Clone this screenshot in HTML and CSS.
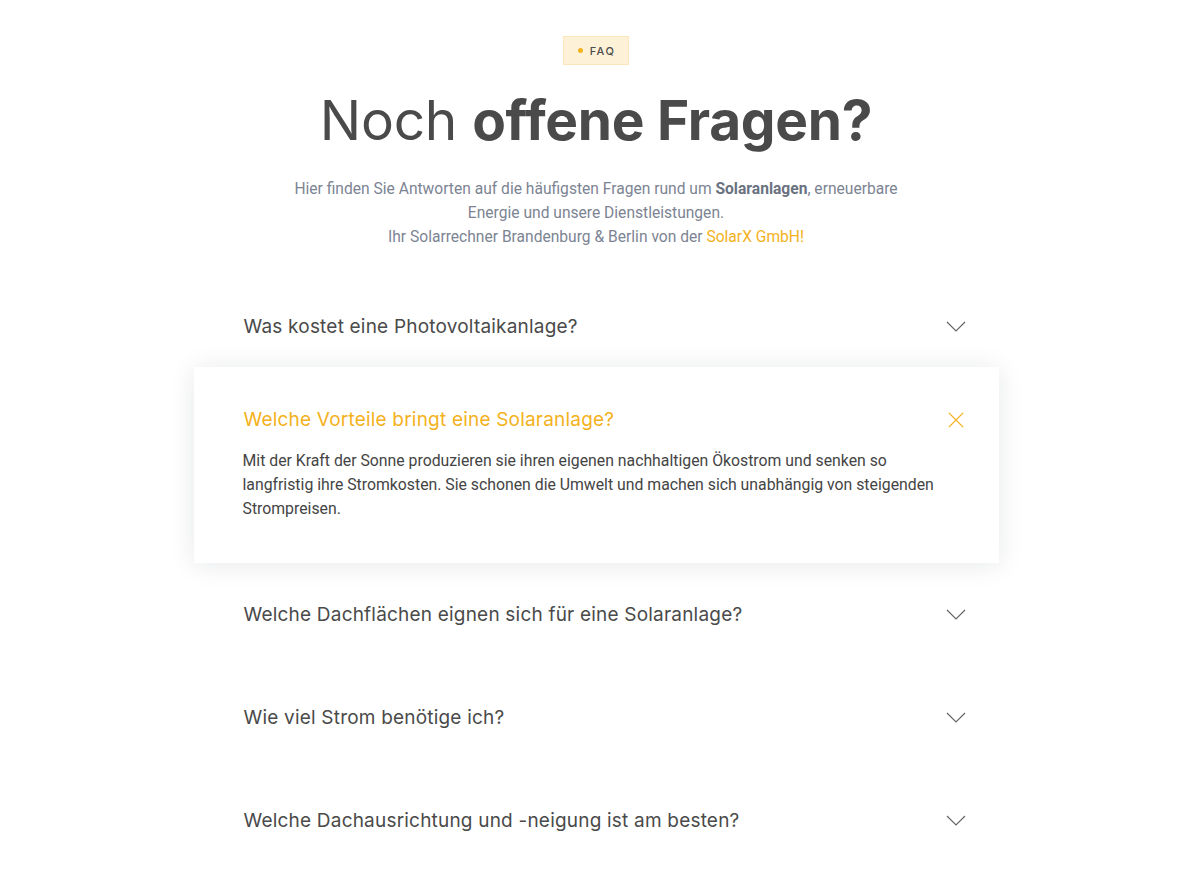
FILE: index.html
```html
<!DOCTYPE html>
<html lang="de">
<head>
  <meta charset="UTF-8">
  <meta name="viewport" content="width=device-width, initial-scale=1">
  <title>FAQ – SolarX GmbH</title>
  <link rel="stylesheet" href="styles.css">
</head>
<body>
  <section class="faq">
    <span class="badge"><span class="badge-dot"></span>FAQ</span>
    <h1 class="title">Noch <strong>offene Fragen?</strong></h1>
    <p class="intro">
      Hier finden Sie Antworten auf die häufigsten Fragen rund um <strong>Solaranlagen</strong>, erneuerbare
      Energie und unsere Dienstleistungen.<br>
      Ihr Solarrechner Brandenburg &amp; Berlin von der <a href="#">SolarX GmbH!</a>
    </p>

    <div class="faq-list">
      <div class="faq-item first">
        <span class="question">Was kostet eine Photovoltaikanlage?</span>
        <svg class="icon" viewBox="0 0 20 12"><path d="M1 1l9 9 9-9"/></svg>
      </div>
      <div class="faq-item open">
        <div class="faq-head">
          <span class="question">Welche Vorteile bringt eine Solaranlage?</span>
          <svg class="icon icon-close" viewBox="0 0 18 18"><path d="M1 1l16 16M17 1L1 17"/></svg>
        </div>
        <p class="answer">Mit der Kraft der Sonne produzieren sie ihren eigenen nachhaltigen Ökostrom und senken so langfristig ihre Stromkosten. Sie schonen die Umwelt und machen sich unabhängig von steigenden Strompreisen.</p>
      </div>
      <div class="faq-item">
        <span class="question">Welche Dachflächen eignen sich für eine Solaranlage?</span>
        <svg class="icon" viewBox="0 0 20 12"><path d="M1 1l9 9 9-9"/></svg>
      </div>
      <div class="faq-item">
        <span class="question">Wie viel Strom benötige ich?</span>
        <svg class="icon" viewBox="0 0 20 12"><path d="M1 1l9 9 9-9"/></svg>
      </div>
      <div class="faq-item">
        <span class="question">Welche Dachausrichtung und -neigung ist am besten?</span>
        <svg class="icon" viewBox="0 0 20 12"><path d="M1 1l9 9 9-9"/></svg>
      </div>
    </div>
  </section>
</body>
</html>
```

FILE: styles.css
```css
body {
  margin: 0;
  background: #fff;
  color: #4a4a4a;
  font-family: Roboto, 'Liberation Sans', Arial, sans-serif;
}
.faq {
  display: flex;
  flex-direction: column;
  align-items: center;
  padding: 36px 8px 0 0;
}
.badge {
  display: inline-flex;
  align-items: center;
  gap: 7px;
  height: 29px;
  padding: 0 13px 0 14px;
  box-sizing: border-box;
  background: #fdf1d8;
  border: 1px solid #fbe6bc;
  color: #4d4d4d;
  font-family: Inter, sans-serif;
  font-size: 11px;
  font-weight: 500;
  letter-spacing: 1.4px;
}
.badge-dot {
  width: 5px;
  height: 5px;
  border-radius: 50%;
  background: #f4b120;
}
.title {
  margin: 20px 0 0;
  font-family: Inter, sans-serif;
  font-size: 55px;
  font-weight: 400;
  letter-spacing: -0.3px;
  line-height: 70px;
  color: #4a4a4a;
}
.title strong {
  font-weight: 700;
}
.intro {
  margin: 22px 0 0;
  width: 640px;
  text-align: center;
  font-size: 15.6px;
  line-height: 24px;
  color: #7c8493;
}
.intro strong {
  color: #6a7280;
  font-weight: 700;
}
.intro a {
  color: #f4b120;
  text-decoration: none;
}
.faq-list {
  width: 805px;
  margin-top: 26px;
}
.faq-item {
  display: flex;
  align-items: center;
  justify-content: space-between;
  padding: 39px 33px 38px 50px;
}
.faq-item.first {
  padding-bottom: 27px;
}
.question {
  font-family: Inter, sans-serif;
  font-size: 19px;
  line-height: 26px;
  color: #4a4a4a;
  letter-spacing: 0.2px;
}
.icon {
  width: 20px;
  height: 12px;
  fill: none;
  stroke: #666;
  stroke-width: 1.2;
}
.faq-item.open {
  display: block;
  padding: 40px 33px 42px 49px;
  background: #fff;
  box-shadow: 0 2px 24px rgba(20, 30, 50, 0.1);
}
.faq-head {
  display: flex;
  align-items: center;
  justify-content: space-between;
}
.open .question {
  color: #f4b120;
  margin-left: 1px;
}
.icon-close {
  width: 16px;
  height: 16px;
  margin-right: 2px;
  stroke: #f4b120;
  stroke-width: 1.5;
}
.answer {
  margin: 16px 0 0;
  font-size: 15.8px;
  line-height: 24px;
  color: #444;
  padding-right: 8px;
}
```
